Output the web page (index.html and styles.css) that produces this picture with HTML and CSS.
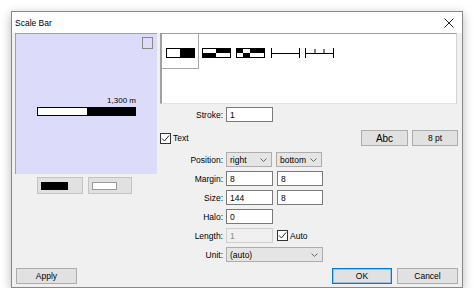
FILE: index.html
```html
<!DOCTYPE html>
<html lang="en">
<head>
  <meta charset="UTF-8">
  <title>Scale Bar</title>
  <link rel="stylesheet" href="styles.css">
</head>
<body>
  <div class="dialog">
    <div class="titlebar">
      <span class="title">Scale Bar</span>
      <svg class="close" width="10" height="10" viewBox="0 0 10 10"><path d="M0.5 0.5 L9.5 9.5 M9.5 0.5 L0.5 9.5" stroke="#222" stroke-width="1"/></svg>
    </div>
    <div class="content">
      <div class="left">
        <div class="preview">
          <span class="corner"></span>
          <div class="sample">
            <div class="sample-label">1,300 m</div>
            <div class="sample-bar"><span class="seg seg-white"></span><span class="seg seg-black"></span></div>
          </div>
        </div>
        <div class="colors">
          <div class="color-btn"><span class="swatch swatch-black"></span></div>
          <div class="color-btn color-btn-2"><span class="swatch swatch-white"></span></div>
        </div>
      </div>
      <div class="right">
        <div class="styles">
          <div class="style-item selected">
            <svg width="29" height="10" viewBox="0 0 29 10"><rect x="0.5" y="0.5" width="28" height="9" fill="#fff" stroke="#000"/><rect x="14" y="0" width="15" height="10" fill="#000"/></svg>
          </div>
          <div class="style-item">
            <svg width="29" height="10" viewBox="0 0 29 10"><rect x="0.5" y="0.5" width="28" height="9" fill="#fff" stroke="#000"/><rect x="14" y="0" width="15" height="5" fill="#000"/><rect x="0" y="5" width="14" height="5" fill="#000"/></svg>
          </div>
          <div class="style-item">
            <svg width="29" height="10" viewBox="0 0 29 10"><rect x="0.5" y="0.5" width="28" height="9" fill="#fff" stroke="#000"/><rect x="0" y="0" width="7" height="5" fill="#000"/><rect x="14" y="0" width="15" height="5" fill="#000"/><rect x="7" y="5" width="7" height="5" fill="#000"/></svg>
          </div>
          <div class="style-item">
            <svg width="29" height="10" viewBox="0 0 29 10"><path d="M0.5 0 V10 M28.5 0 V10 M0 5.5 H29" stroke="#000" stroke-width="1" fill="none"/></svg>
          </div>
          <div class="style-item">
            <svg width="29" height="10" viewBox="0 0 29 10"><path d="M0.5 0 V10 M28.5 0 V10 M0 5.5 H29 M10 1 V5.5 M19 1 V5.5" stroke="#000" stroke-width="1" fill="none"/></svg>
          </div>
        </div>

        <div class="row stroke-row">
          <span class="lbl">Stroke:</span>
          <input class="field" type="text" value="1">
        </div>

        <div class="row text-row">
          <label class="check">
            <svg class="box" width="11" height="11" viewBox="0 0 11 11"><rect x="0.5" y="0.5" width="10" height="10" fill="#fff" stroke="#333"/><path d="M2 5.5 L4.5 8 L9 2.5" stroke="#222" stroke-width="1" fill="none"/></svg>
            Text
          </label>
          <div class="font-btns">
            <div class="btn font-btn abc">Abc</div>
            <div class="btn font-btn font-btn-2">8 pt</div>
          </div>
        </div>

        <div class="fields">
          <div class="row">
            <span class="lbl">Position:</span>
            <div class="select"><span>right</span><svg width="7" height="4" viewBox="0 0 7 4"><path d="M0.5 0.5 L3.5 3.5 L6.5 0.5" stroke="#666" fill="none"/></svg></div>
            <div class="select second"><span>bottom</span><svg width="7" height="4" viewBox="0 0 7 4"><path d="M0.5 0.5 L3.5 3.5 L6.5 0.5" stroke="#666" fill="none"/></svg></div>
          </div>
          <div class="row">
            <span class="lbl">Margin:</span>
            <input class="field" type="text" value="8">
            <input class="field second" type="text" value="8">
          </div>
          <div class="row">
            <span class="lbl">Size:</span>
            <input class="field" type="text" value="144">
            <input class="field second" type="text" value="8">
          </div>
          <div class="row">
            <span class="lbl">Halo:</span>
            <input class="field" type="text" value="0">
          </div>
          <div class="row">
            <span class="lbl">Length:</span>
            <input class="field disabled" type="text" value="1" disabled>
            <label class="check second">
              <svg class="box" width="11" height="11" viewBox="0 0 11 11"><rect x="0.5" y="0.5" width="10" height="10" fill="#fff" stroke="#333"/><path d="M2 5.5 L4.5 8 L9 2.5" stroke="#222" stroke-width="1" fill="none"/></svg>
              Auto
            </label>
          </div>
          <div class="row">
            <span class="lbl">Unit:</span>
            <div class="select wide"><span>(auto)</span><svg width="7" height="4" viewBox="0 0 7 4"><path d="M0.5 0.5 L3.5 3.5 L6.5 0.5" stroke="#666" fill="none"/></svg></div>
          </div>
        </div>
      </div>
    </div>
    <div class="footer">
      <div class="btn">Apply</div>
      <div class="footer-right">
        <div class="btn default">OK</div>
        <div class="btn">Cancel</div>
      </div>
    </div>
  </div>
</body>
</html>
```

FILE: styles.css
```css
* {
  box-sizing: border-box;
}
body {
  margin: 0;
  background: #fff;
  font-family: "Liberation Sans", Arial, sans-serif;
  font-size: 8.5px;
  color: #000;
}
.dialog {
  display: flex;
  flex-direction: column;
  width: 452px;
  height: 277px;
  margin: 11px 0 0 11px;
  border: 1px solid #888;
  background: #f0f0f0;
  box-shadow: 0 3px 10px rgba(0, 0, 0, 0.28);
}
.titlebar {
  display: flex;
  align-items: center;
  justify-content: space-between;
  height: 21px;
  padding: 0 8px 0 3px;
  background: #fff;
}
.content {
  display: flex;
  gap: 3px;
  padding: 0 4px 0 3px;
}
.left {
  display: flex;
  flex-direction: column;
  width: 142px;
}
.preview {
  position: relative;
  display: flex;
  align-items: center;
  justify-content: center;
  height: 141px;
  padding-top: 4px;
  border-top: 1px solid #a0a0a0;
  border-left: 1px solid #a0a0a0;
  background: #dcdcfa;
}
.corner {
  position: absolute;
  top: 3px;
  right: 4px;
  width: 11px;
  height: 12px;
  border: 1px solid #888;
}
.sample {
  width: 99px;
}
.sample-label {
  margin-bottom: 2px;
  text-align: right;
  font-size: 8px;
}
.sample-bar {
  display: flex;
  height: 9px;
  border: 1px solid #000;
}
.seg {
  flex: 1;
}
.seg-white {
  background: #fff;
}
.seg-black {
  background: #000;
}
.colors {
  display: flex;
  gap: 5px;
  margin-top: 3px;
  padding-left: 22px;
}
.color-btn {
  display: flex;
  align-items: center;
  width: 46px;
  height: 17px;
  padding-left: 3px;
  border: 1px solid #c4c4c4;
  background: #e1e1e1;
}
.color-btn-2 {
  width: 44px;
}
.swatch {
  width: 27px;
  height: 8px;
}
.swatch-black {
  background: #000;
}
.swatch-white {
  width: 25px;
  border: 1px solid #999;
  background: #fff;
}
.right {
  display: flex;
  flex-direction: column;
  width: 298px;
}
.styles {
  display: flex;
  height: 71px;
  margin-right: 1px;
  border-top: 1px solid #a0a0a0;
  border-left: 2px solid #a0a0a0;
  border-right: 1px solid #d4d4d4;
  border-bottom: 1px solid #e3e3e3;
  background: #fff;
}
.style-item {
  display: flex;
  align-items: center;
  justify-content: center;
  width: 34.5px;
  height: 35px;
  padding-top: 3px;
}
.style-item svg {
  display: block;
}
.style-item.selected {
  width: 37px;
  border-right: 1px solid #a8a8a8;
  border-bottom: 1px solid #a8a8a8;
}
.row {
  display: flex;
  align-items: center;
  height: 15px;
}
.stroke-row {
  margin-top: 3px;
}
.lbl {
  width: 66px;
  padding-right: 3px;
  text-align: right;
}
.field {
  width: 47px;
  height: 15px;
  margin: 0;
  padding: 0 3px;
  border: 1px solid #7a7a7a;
  background: #fff;
  font: inherit;
  color: #000;
  outline: none;
}
.field.disabled {
  border-color: #cfcfcf;
  background: #f0f0f0;
  color: #8a8a8a;
}
.second {
  margin-left: 4px;
}
.field.second {
  width: 46px;
}
.text-row {
  justify-content: space-between;
  height: 16px;
  margin-top: 8px;
}
.check {
  display: flex;
  align-items: center;
  gap: 2px;
}
.box {
  display: block;
}
.font-btns {
  display: flex;
  gap: 4px;
}
.btn {
  display: flex;
  align-items: center;
  justify-content: center;
  width: 61px;
  height: 16px;
  border: 1px solid #adadad;
  background: #e1e1e1;
}
.font-btn {
  width: 47px;
}
.font-btn-2 {
  width: 46px;
}
.abc {
  font-size: 10px;
}
.fields {
  display: flex;
  flex-direction: column;
  gap: 4px;
  margin-top: 6px;
}
.select {
  display: flex;
  align-items: center;
  justify-content: space-between;
  width: 46px;
  height: 15px;
  padding: 0 4px 0 3px;
  border: 1px solid #adadad;
  background: #e5e5e5;
}
.select svg {
  display: block;
}
.select.wide {
  width: 97px;
}
.footer {
  display: flex;
  justify-content: space-between;
  margin-top: auto;
  padding: 0 4px 3px 4px;
}
.footer-right {
  display: flex;
  gap: 5px;
}
.btn.default {
  width: 60px;
  border-color: #0078d7;
  box-shadow: inset 0 0 0 1px rgba(0, 120, 215, 0.3);
}
```
